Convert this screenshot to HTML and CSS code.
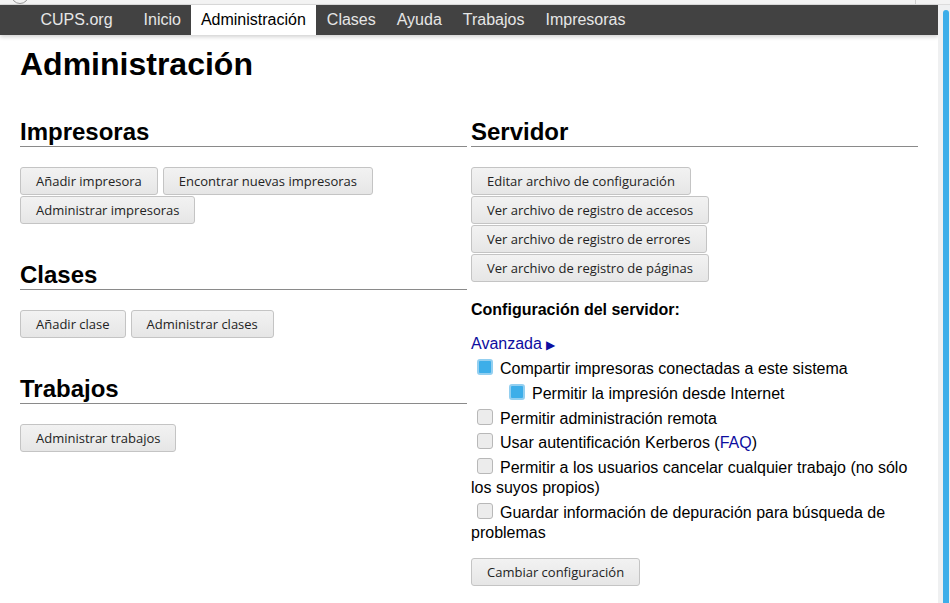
FILE: index.html
```html
<!DOCTYPE html>
<html lang="es">
<head>
<meta charset="utf-8">
<title>Administración - CUPS</title>
<link rel="stylesheet" href="styles.css">
</head>
<body>
<div class="chrome"><span class="chrome-circle"></span><span class="chrome-tick"></span></div>
<div class="frame">
  <div class="page">
    <nav class="nav">
      <a class="nav-item brand">CUPS.org</a>
      <a class="nav-item">Inicio</a>
      <a class="nav-item active">Administración</a>
      <a class="nav-item">Clases</a>
      <a class="nav-item">Ayuda</a>
      <a class="nav-item">Trabajos</a>
      <a class="nav-item">Impresoras</a>
    </nav>
    <main class="content">
      <h1 class="title">Administración</h1>
      <div class="cols">
        <section class="col">
          <h2 class="section-title">Impresoras</h2>
          <div class="btns">
            <div class="btn-row"><button class="btn">Añadir impresora</button><button class="btn">Encontrar nuevas impresoras</button></div>
            <div class="btn-row"><button class="btn">Administrar impresoras</button></div>
          </div>
          <h2 class="section-title">Clases</h2>
          <div class="btns">
            <div class="btn-row"><button class="btn">Añadir clase</button><button class="btn">Administrar clases</button></div>
          </div>
          <h2 class="section-title">Trabajos</h2>
          <div class="btns">
            <div class="btn-row"><button class="btn">Administrar trabajos</button></div>
          </div>
        </section>
        <section class="col">
          <h2 class="section-title">Servidor</h2>
          <div class="btns">
            <div class="btn-row"><button class="btn">Editar archivo de configuración</button></div>
            <div class="btn-row"><button class="btn">Ver archivo de registro de accesos</button></div>
            <div class="btn-row"><button class="btn">Ver archivo de registro de errores</button></div>
            <div class="btn-row"><button class="btn">Ver archivo de registro de páginas</button></div>
          </div>
          <p class="config-title">Configuración del servidor:</p>
          <p class="advanced"><a class="link">Avanzada</a> <span class="arrow">▶</span></p>
          <div class="opt"><span class="cb checked"></span>Compartir impresoras conectadas a este sistema</div>
          <div class="opt nested"><span class="cb checked"></span>Permitir la impresión desde Internet</div>
          <div class="opt"><span class="cb"></span>Permitir administración remota</div>
          <div class="opt"><span class="cb"></span>Usar autentificación Kerberos (<a class="link">FAQ</a>)</div>
          <div class="opt"><span class="cb"></span>Permitir a los usuarios cancelar cualquier trabajo (no sólo los suyos propios)</div>
          <div class="opt"><span class="cb"></span>Guardar información de depuración para búsqueda de problemas</div>
          <div class="btns submit"><div class="btn-row"><button class="btn">Cambiar configuración</button></div></div>
        </section>
      </div>
    </main>
  </div>
  <div class="scrollbar"><div class="thumb"></div></div>
</div>
</body>
</html>
```

FILE: styles.css
```css
* { box-sizing: border-box; }
html, body { margin: 0; padding: 0; height: 100%; overflow: hidden; }
body {
  font-family: "Liberation Sans", Arial, sans-serif;
  font-size: 16px;
  color: #000;
  background: #fff;
  display: flex;
  flex-direction: column;
}
.chrome {
  height: 5px;
  flex: none;
  background: #f3f3f3;
  border-bottom: 1px solid #dcdcdc;
  overflow: hidden;
  display: flex;
}
.chrome-circle {
  width: 18px; height: 18px;
  border: 1px solid #9a9a9a;
  border-radius: 50%;
  margin: -14px 0 0 11px;
  flex: none;
}
.chrome-tick {
  width: 1px; height: 5px; background: #cfcfcf; margin-left: 886px;
}
.frame { flex: 1; display: flex; min-height: 0; }
.page { flex: 1; min-width: 0; }
.nav {
  height: 30px;
  background: #424242;
  display: flex;
  align-items: stretch;
  padding-left: 30px;
  box-shadow: 0 2px 4px rgba(0,0,0,0.18);
}
.nav-item {
  display: flex;
  align-items: center;
  padding: 0 10.5px;
  color: #e6e6e6;
  font-size: 16px;
  line-height: 30px;
}
.nav-item.brand { margin-right: 10px; }
.nav-item.active { background: #fff; color: #000; padding: 0 10.5px 0 9.5px; }
.content { padding: 0 20px; }
.title {
  font-size: 32px;
  line-height: 37px;
  font-weight: bold;
  margin: 11px 0 0;
}
.cols {
  display: grid;
  grid-template-columns: 447px 447px;
  column-gap: 4px;
}
.section-title {
  font-size: 24px;
  line-height: 28px;
  font-weight: bold;
  margin: 35px 0 0;
  border-bottom: 1px solid #8a8a8a;
}
.btns + .section-title { margin-top: 37px; }
.btns { margin-top: 20px; display: flex; flex-direction: column; gap: 1px; }
.btn-row { display: flex; gap: 5px; }
.btn {
  font-family: "Open Sans", "Noto Sans", sans-serif;
  font-size: 13px;
  color: #232323;
  height: 28px;
  padding: 0 15px;
  border: 1px solid #c4c4c4;
  border-radius: 3px;
  background: linear-gradient(#f2f2f2, #e6e6e6);
  line-height: 26px;
}
.config-title {
  font-weight: bold;
  line-height: 20px;
  margin: 18px 0 0;
}
.advanced { margin: 14px 0 0; line-height: 20px; }
.link { color: #0d0da0; }
.arrow { color: #0d0da0; font-size: 12px; }
.opt {
  line-height: 20px;
  margin-top: 4.75px;
}
.advanced + .opt { margin-top: 4px; }
.opt.nested { padding-left: 32px; }
.cb {
  display: inline-block;
  width: 16px;
  height: 16px;
  margin: 0 7px 0 6px;
  vertical-align: -1px;
  border: 1px solid #b8b8b8;
  border-radius: 3px;
  background: #ececec;
}
.cb.checked {
  background: #3daee9;
  border: 2px solid #93cff0;
  box-shadow: inset 0 0 0 1px #3daee9;
}
.submit { margin-top: 15px; }
.scrollbar {
  width: 12px;
  flex: none;
  background: #eff0f1;
  padding: 5px 1px 0 5px;
}
.thumb {
  height: 100%;
  background: #3daee9;
  border-radius: 3px 3px 0 0;
}
```
